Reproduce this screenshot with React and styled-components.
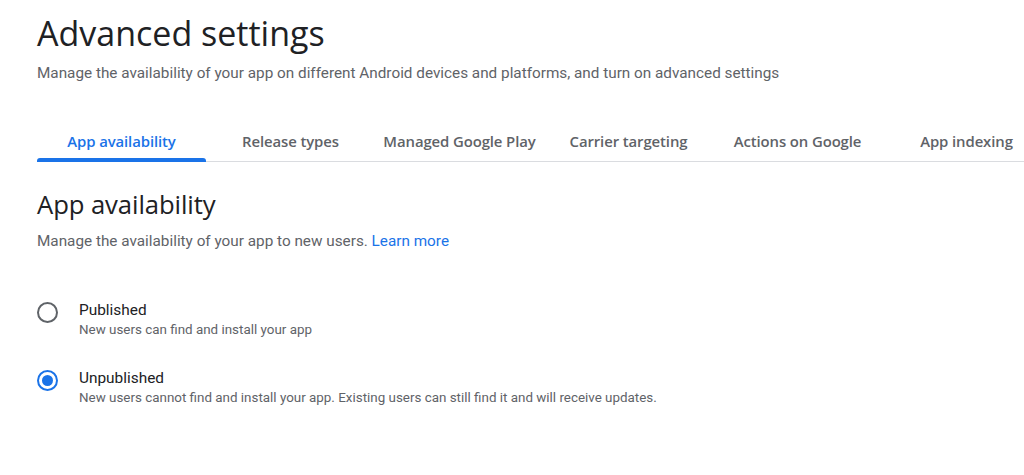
import React, { useState } from "react";
import styled, { createGlobalStyle } from "styled-components";

const GlobalStyle = createGlobalStyle`
  body {
    margin: 0;
    background: #fff;
    font-family: Roboto, "Liberation Sans", sans-serif;
    overflow: hidden;
  }
`;

const tabs = [
  "App availability",
  "Release types",
  "Managed Google Play",
  "Carrier targeting",
  "Actions on Google",
  "App indexing",
];

const options = [
  {
    id: "published",
    label: "Published",
    hint: "New users can find and install your app",
  },
  {
    id: "unpublished",
    label: "Unpublished",
    hint: "New users cannot find and install your app. Existing users can still find it and will receive updates.",
  },
];

function App() {
  const [tab, setTab] = useState(0);
  const [status, setStatus] = useState("unpublished");

  return (
    <Page>
      <GlobalStyle />
      <Title>Advanced settings</Title>
      <SubTitle>
        Manage the availability of your app on different Android devices and
        platforms, and turn on advanced settings
      </SubTitle>
      <TabBar>
        {tabs.map((t, i) => (
          <Tab key={t} active={i === tab} onClick={() => setTab(i)}>
            {t}
          </Tab>
        ))}
      </TabBar>
      <Section>
        <SectionTitle>App availability</SectionTitle>
        <SubTitle>
          Manage the availability of your app to new users.{" "}
          <Link href="#">Learn more</Link>
        </SubTitle>
        <Options>
          {options.map((o) => (
            <Option key={o.id} onClick={() => setStatus(o.id)}>
              <Radio checked={status === o.id} />
              <OptionText>
                <Label>{o.label}</Label>
                <Hint>{o.hint}</Hint>
              </OptionText>
            </Option>
          ))}
        </Options>
      </Section>
    </Page>
  );
}

export default App;

const Page = styled.div`
  padding: 13px 0 0 37px;
`;

const Title = styled.h1`
  margin: 0;
  font-family: "Open Sans", sans-serif;
  font-weight: 400;
  font-size: 34px;
  line-height: 40px;
  color: #202124;
  letter-spacing: 0;
`;

const SubTitle = styled.div`
  margin-top: 10px;
  font-size: 15.3px;
  line-height: 20px;
  color: #5f6368;
`;

const TabBar = styled.div`
  display: flex;
  margin-top: 38px;
  border-bottom: 1px solid #dadce0;
`;

const Tab = styled.div`
  flex: 0 0 169px;
  height: 40px;
  display: flex;
  align-items: center;
  justify-content: center;
  position: relative;
  font-family: "Open Sans", sans-serif;
  font-size: 14.9px;
  font-weight: 600;
  letter-spacing: -0.1px;
  white-space: nowrap;
  color: ${(p) => (p.active ? "#1a73e8" : "#5f6368")};
  cursor: pointer;

  &::after {
    content: "";
    display: ${(p) => (p.active ? "block" : "none")};
    position: absolute;
    left: 0;
    right: 0;
    bottom: -1px;
    height: 4px;
    border-radius: 3px 3px 0 0;
    background: #1a73e8;
  }
`;

const Section = styled.div`
  padding-top: 27px;
`;

const SectionTitle = styled.h2`
  margin: 0;
  font-family: "Open Sans", sans-serif;
  font-weight: 400;
  font-size: 25.7px;
  line-height: 32px;
  color: #202124;
  letter-spacing: -0.1px;
`;

const Link = styled.a`
  color: #1a73e8;
  text-decoration: none;
`;

const Options = styled.div`
  display: flex;
  flex-direction: column;
  gap: 28px;
  margin-top: 49px;
`;

const Option = styled.div`
  display: flex;
  align-items: flex-start;
  gap: 21px;
  cursor: pointer;
`;

const Radio = styled.span`
  flex: none;
  box-sizing: border-box;
  width: 21px;
  height: 21px;
  margin-top: 2px;
  border-radius: 50%;
  border: 2px solid ${(p) => (p.checked ? "#1a73e8" : "#5f6368")};
  display: flex;
  align-items: center;
  justify-content: center;

  &::after {
    content: "";
    display: ${(p) => (p.checked ? "block" : "none")};
    width: 11px;
    height: 11px;
    border-radius: 50%;
    background: #1a73e8;
  }
`;

const OptionText = styled.div`
  display: flex;
  flex-direction: column;
`;

const Label = styled.div`
  font-size: 15.4px;
  line-height: 20px;
  color: #202124;
`;

const Hint = styled.div`
  font-size: 13.4px;
  line-height: 20px;
  color: #5f6368;
`;
